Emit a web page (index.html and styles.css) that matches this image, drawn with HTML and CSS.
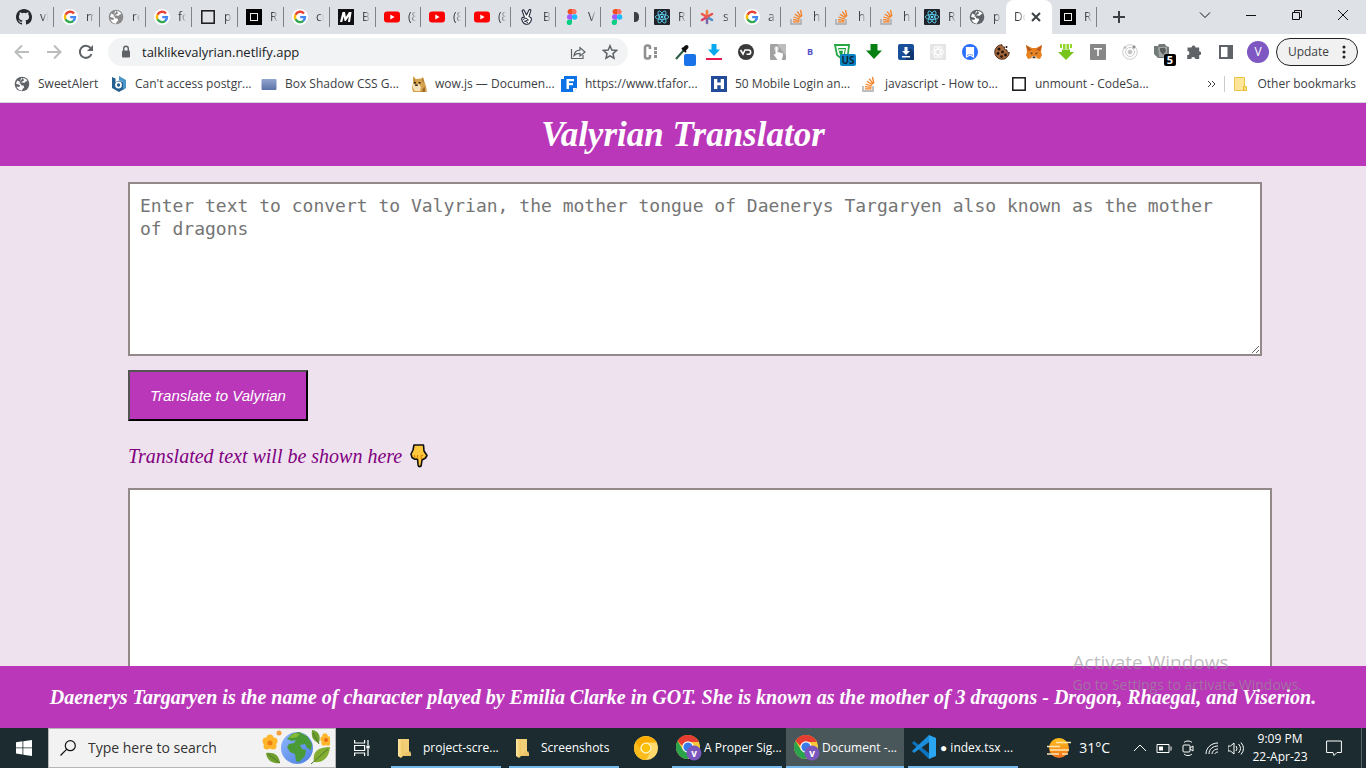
FILE: index.html
```html
<!DOCTYPE html>
<html lang="en">
<head>
<meta charset="utf-8">
<title>Document</title>
<link rel="stylesheet" href="styles.css">
</head>
<body>
<svg class="sprite" aria-hidden="true">
  <defs>
    <linearGradient id="sun" x1="0" y1="0" x2="0" y2="1"><stop offset="0" stop-color="#ffc21a"/><stop offset="1" stop-color="#f0701c"/></linearGradient>
    <linearGradient id="ocean" x1="0" y1="0" x2="1" y2="1"><stop offset="0" stop-color="#8fb8ff"/><stop offset="1" stop-color="#4a7de0"/></linearGradient>
    <linearGradient id="fold" x1="0" y1="0" x2="1" y2="0"><stop offset="0" stop-color="#ffe8a3"/><stop offset="1" stop-color="#eec45e"/></linearGradient>
    <linearGradient id="slate" x1="0" y1="0" x2="0" y2="1"><stop offset="0" stop-color="#93a6d0"/><stop offset="1" stop-color="#5b71a7"/></linearGradient>
  </defs>
  <symbol id="github" viewBox="0 0 16 16"><path fill="#24292f" d="M8 0C3.58 0 0 3.58 0 8c0 3.54 2.29 6.53 5.47 7.59.4.07.55-.17.55-.38v-1.49c-2.23.48-2.7-.94-2.7-.94-.36-.92-.89-1.17-.89-1.17-.73-.5.05-.49.05-.49.8.06 1.23.83 1.23.83.71 1.23 1.87.87 2.33.66.07-.52.28-.87.5-1.07-1.77-.2-3.64-.89-3.64-3.95 0-.87.31-1.59.82-2.15-.08-.2-.36-1.02.08-2.12 0 0 .67-.21 2.2.82a7.6 7.6 0 0 1 4 0c1.53-1.04 2.2-.82 2.2-.82.44 1.1.16 1.92.08 2.12.51.56.82 1.27.82 2.15 0 3.07-1.87 3.75-3.65 3.95.29.25.54.73.54 1.48v2.2c0 .21.15.46.55.38A8 8 0 0 0 16 8c0-4.42-3.58-8-8-8z"/></symbol>
  <symbol id="google" viewBox="0 0 16 16"><circle cx="8" cy="8" r="8" fill="#fff"/><path fill="none" stroke="#ea4335" stroke-width="2.4" d="M12 4.5A5.1 5.1 0 0 0 3.5 5.7"/><path fill="none" stroke="#fbbc05" stroke-width="2.4" d="M3.5 5.6a5.1 5.1 0 0 0 0 4.8"/><path fill="none" stroke="#34a853" stroke-width="2.4" d="M3.5 10.3a5.1 5.1 0 0 0 7.9 1.5"/><path fill="none" stroke="#4285f4" stroke-width="2.4" d="M8.2 8.1H13a5 5 0 0 1-1.8 3.8"/></symbol>
  <symbol id="globe" viewBox="0 0 16 16"><circle cx="8" cy="8" r="7.3" fill="currentColor"/><path fill="#fff" d="M7.2 2.2c2.6-.6 5.2.8 6.300 3l-2 .6-1.700 1.700-1.900-.5-1.300.5.6 1.700 2.200.4.8 1.600-1.500 1.900-.8 1.600c-2.500-.1-4.700-1.900-5.400-4.200L5 11l1.300-1.200-1.600-1.400-2.500-.3c0-1.400.5-2.700 1.300-3.700l2 1.300 1.700-.2-.9-1.500z"/><path fill="currentColor" d="m8.500 2 1.700 2.300-2.200 1.500-1.600.4 2.200.2 2.300.5 1.500-1.600 1.500.4V9l-2.600 3 .2-2-1.600-1-1.700-.1-.8-1.400H5.200z"/></symbol>
  <symbol id="square" viewBox="0 0 16 16"><rect x="1.8" y="1.8" width="12.4" height="12.4" fill="none" stroke="#161616" stroke-width="1.5"/></symbol>
  <symbol id="darksquare" viewBox="0 0 16 16"><path d="M0 0h16v16H0z"/><rect x="4.5" y="4.5" width="7" height="7" fill="none" stroke="#eee"/></symbol>
  <symbol id="mui" viewBox="0 0 16 16"><path fill="#101014" d="M0 0h16v16H0z"/><path fill="#fff" d="M4.500 3h2.500l.8 5L11 3h2.600L12 13H9.900l1-5.500L7.800 12H6.600L5.700 7.500 4.200 13H2z"/></symbol>
  <symbol id="youtube" viewBox="0 0 16 16"><rect y="2.5" width="16" height="11" rx="3" fill="#f00"/><path fill="#fff" d="m6.3 5.5 4.3 2.5-4.3 2.5z"/></symbol>
  <symbol id="victory" viewBox="0 0 16 16"><path fill="#fff" stroke="#25283b" stroke-width="1.1" stroke-linejoin="round" d="M5.5 8.2 3.2 2c-.2-1 1.3-1.7 2-.5L7.5 6 10 1c.7-1 2.1-.4 1.8.7L10 7.6l2 1.2c.8 1.7-.2 4.4-2.2 6-2 1.1-5 .3-6-1.7L2.6 10c0-1.3 1.4-2 2.9-1.8z"/><path fill="none" stroke="#25283b" d="M4 10.5 7 9l2.5 2-3 .6M5 12l4 1.5"/></symbol>
  <symbol id="figma" viewBox="0 0 16 16"><path fill="#f24e1e" d="M8 0H5.7a2.7 2.7 0 0 0 0 5.3H8z"/><path fill="#ff7262" d="M8 0h2.5a2.7 2.7 0 0 1 0 5.3H8z"/><path fill="#a259ff" d="M8 5.3H5.7a2.7 2.7 0 0 0 0 5.4H8z"/><circle cx="10.6" cy="8" r="2.7" fill="#1abcfe"/><path fill="#0acf83" d="M8 10.7H5.7A2.7 2.7 0 1 0 8 13.3z"/></symbol>
  <symbol id="react" viewBox="0 0 16 16"><rect width="16" height="16" rx="1" fill="#20232a"/><g fill="none" stroke="#61dafb" stroke-width=".8"><ellipse cx="8" cy="8" rx="6.7" ry="2.5"/><ellipse cx="8" cy="8" rx="6.7" ry="2.5" transform="rotate(60 8 8)"/><ellipse cx="8" cy="8" rx="6.7" ry="2.5" transform="rotate(120 8 8)"/></g><circle cx="8" cy="8" r="1.3" fill="#61dafb"/></symbol>
  <symbol id="asterisk" viewBox="0 0 16 16"><g stroke-width="2.6" stroke-linecap="round"><path stroke="#f0813a" d="M8 8V2"/><path stroke="#e8574d" d="m8 8 5-3"/><path stroke="#4a8ec9" d="m8 8 5 3"/><path stroke="#7d6aa8" d="M8 8v6"/><path stroke="#d3436c" d="m8 8-5 3"/><path stroke="#ef5a4a" d="M8 8 3 5"/></g></symbol>
  <symbol id="stack" viewBox="0 0 16 16"><path fill="none" stroke="#a7a9ac" stroke-width="1.4" d="M2 10v5h10v-5"/><path stroke="#f48024" stroke-width="1.3" d="M4 12.8h6.5M4 10.6l6.5.8M4.5 8l6.3 2M5.8 5.2l5.6 3.4M8.2 2.6l4 5.2M11.5 1l1.4 6.3"/></symbol>
  <symbol id="bitnami" viewBox="0 0 16 16"><path fill="#255f8f" d="m1 1 3.500 1.500V6L8 4.500l6 2.500v5.500L8 16l-7-4z"/><path fill="#4a96c8" d="m8 0 7 4v8l-3 2V6L8 4z"/><circle cx="7.500" cy="9" r="3.400" fill="#fff"/><circle cx="7.500" cy="9" r="1.700" fill="#255f8f"/></symbol>
  <symbol id="panel" viewBox="0 0 16 16"><rect x=".5" y="3" width="15" height="11" rx="1" fill="url(#slate)"/></symbol>
  <symbol id="doge" viewBox="0 0 16 16"><path fill="#d5a24e" d="m2 0 3 3 5-.5L12 1l1.600 5 1.400 4 1 6H2l-1-4 1-5z"/><path fill="#f3e2b8" d="m2 8 3 1 3-1 2 3-1 4H4l-2-3z"/><path fill="#31241a" d="M3 6h2v1.400H3zM7.600 6h2v1.400h-2zM4.200 8.500h2.500v1.600H4.200z"/><path fill="#9d6a2a" d="m11 4 1-2 1 5zM3 2l1 3-1 1zM12 12l2-1v5h-3z"/></symbol>
  <symbol id="fbook" viewBox="0 0 16 16"><path fill="#0b72e7" d="M3 0h13v12l-4 4H0V3h3z"/><path fill="#fff" d="M5.500 3H13v2.300H8v1.800h4v2.200H8V13H5.500z"/><path fill="#fff" d="M12 12h4l-4 4z"/></symbol>
  <symbol id="hicon" viewBox="0 0 16 16"><path fill="#234b9b" d="M0 0h16v16H0z"/><path fill="#fff" d="M3 3h3.3v3.6h3.4V3H13v10H9.7V9.3H6.3V13H3z"/></symbol>
  <symbol id="folder" viewBox="0 0 16 16"><path fill="#ffe59a" stroke="#ecc546" d="M1.5 1.5h10v9h2v4h-12z"/><path fill="#ffdf7d" stroke="#e6bb35" d="M10.5 14.5v-4h1l2 1v3z"/></symbol>
  <symbol id="winfolder" viewBox="0 0 16 20"><path fill="#f2cf76" d="M3 1h9v12l2 2v3H4z"/><path fill="url(#fold)" d="M1 1h3l2 2v15l-2 2-3-2z"/><path fill="#d6a848" d="m8 15 6-2v5H6z" opacity=".3"/></symbol>
  <symbol id="chrome" viewBox="0 0 28 26"><circle cx="12" cy="12" r="12" fill="#f8c73a"/><path fill="#e53d32" d="M1.600 6A12 12 0 0 1 22.800 7H12a6 6 0 0 0-5.600 4z"/><path fill="#2ba24c" d="M1.600 6A12 12 0 0 0 12 24l5-9-5 3-5-3z"/><circle cx="12" cy="12" r="5.800" fill="#fff"/><circle cx="12" cy="12" r="4.600" fill="#387be8"/><circle cx="18" cy="18" r="7.500" fill="#7b57bd"/><text x="18" y="21.500" class="glyph-text" text-anchor="middle" fill="#fff" font-size="10" font-weight="700">v</text></symbol>
</svg>

<div class="browser">
  <div class="tabstrip">
    <div class="tabs">
      <a class="tab" href="#"><svg><use href="#github"/></svg><span>vi</span></a>
      <a class="tab" href="#"><svg><use href="#google"/></svg><span>mo</span></a>
      <a class="tab light" href="#"><svg><use href="#globe"/></svg><span>re</span></a>
      <a class="tab" href="#"><svg><use href="#google"/></svg><span>fo</span></a>
      <a class="tab" href="#"><svg><use href="#square"/></svg><span>p</span></a>
      <a class="tab" href="#"><svg><use href="#darksquare"/></svg><span>R</span></a>
      <a class="tab" href="#"><svg><use href="#google"/></svg><span>cr</span></a>
      <a class="tab" href="#"><svg><use href="#mui"/></svg><span>B</span></a>
      <a class="tab" href="#"><svg><use href="#youtube"/></svg><span>(8</span></a>
      <a class="tab" href="#"><svg><use href="#youtube"/></svg><span>(8</span></a>
      <a class="tab" href="#"><svg><use href="#youtube"/></svg><span>(8</span></a>
      <a class="tab" href="#"><svg><use href="#victory"/></svg><span>B</span></a>
      <a class="tab" href="#"><svg><use href="#figma"/></svg><span>V</span></a>
      <a class="tab" href="#"><svg><use href="#figma"/></svg><svg class="half" viewBox="0 0 9 16"><path fill="#3c4043" d="M1 3c4 0 5 2 5 5s-1 5-5 5z"/></svg></a>
      <a class="tab" href="#"><svg><use href="#react"/></svg><span>R</span></a>
      <a class="tab" href="#"><svg><use href="#asterisk"/></svg><span>s</span></a>
      <a class="tab" href="#"><svg><use href="#google"/></svg><span>a</span></a>
      <a class="tab" href="#"><svg><use href="#stack"/></svg><span>h</span></a>
      <a class="tab" href="#"><svg><use href="#stack"/></svg><span>h</span></a>
      <a class="tab" href="#"><svg><use href="#stack"/></svg><span>h</span></a>
      <a class="tab" href="#"><svg><use href="#react"/></svg><span>R</span></a>
      <a class="tab last-before" href="#"><svg><use href="#globe"/></svg><span>p</span></a>
      <div class="tab active"><span>Do</span><button class="tab-close" aria-label="Close tab"><svg viewBox="0 0 16 16"><path d="m4 4 8 8m0-8-8 8"/></svg></button></div>
      <a class="tab" href="#"><svg><use href="#darksquare"/></svg><span>R</span></a>
    </div>
    <button class="new-tab" aria-label="New tab"><svg viewBox="0 0 16 16"><path d="M8 2v12M2 8h12"/></svg></button>
    <div class="window-buttons">
      <button aria-label="Search tabs"><svg viewBox="0 0 16 16"><path d="m3 5.500 5 5 5-5"/></svg></button>
      <button aria-label="Minimize"><svg viewBox="0 0 16 16"><path d="M3 8.500h10"/></svg></button>
      <button aria-label="Restore"><svg viewBox="0 0 16 16"><path d="M3.500 5.500h7v7h-7zM5.500 5.500v-2h7v7h-2"/></svg></button>
      <button aria-label="Close"><svg viewBox="0 0 16 16"><path d="m3 3 10 10M13 3 3 13"/></svg></button>
    </div>
  </div>

  <div class="toolbar">
    <nav class="nav-buttons">
      <button class="dim" aria-label="Back"><svg viewBox="0 0 16 16"><path d="M15 8H2m6-6.500L1.500 8 8 14.500"/></svg></button>
      <button class="dim" aria-label="Forward"><svg viewBox="0 0 16 16"><path d="M1 8h13M8 1.500 14.500 8 8 14.500"/></svg></button>
      <button aria-label="Reload"><svg viewBox="0 0 16 16"><path d="M13.500 10A6 6 0 1 1 12.500 4"/><path class="solid" d="M15 1v6H9z"/></svg></button>
    </nav>
    <div class="omnibox">
      <svg viewBox="0 0 16 16"><rect x="4" y="6.500" width="8" height="7" rx="1" fill="#5f6368"/><path d="M5.700 7V4.600a2.300 2.300 0 0 1 4.600 0V7" fill="none" stroke="#5f6368" stroke-width="1.400"/></svg>
      <input type="text" aria-label="Address" value="talklikevalyrian.netlify.app">
      <button aria-label="Share"><svg viewBox="0 0 16 16" fill="none" stroke="#5f6368" stroke-width="1.200"><path d="M1.500 5v9.500H13V11"/><path d="M4 11.500c.5-3.500 2.500-5.200 6-5.300V3.500L15 8l-5 4V9.300c-2.500 0-4.500.6-6 2.200z"/></svg></button>
      <button aria-label="Bookmark"><svg viewBox="0 0 16 16" fill="none" stroke="#5f6368" stroke-width="1.500"><path d="m8 1.800 1.800 4.300 4.700.4-3.500 3.100 1 4.600-4-2.400-4 2.400 1-4.600-3.500-3.100 4.700-.4z"/></svg></button>
    </div>
    <div class="extensions">
      <button aria-label="CSS viewer"><svg viewBox="0 0 16 16"><path d="M8 5V3.500a2 2 0 0 0-2-2H5a2 2 0 0 0-2 2v9a2 2 0 0 0 2 2h1a2 2 0 0 0 2-2V11" fill="none" stroke="#909090" stroke-width="2.600"/><path fill="#909090" d="M12 3h3v3h-3zM12 7h3v3h-3zM12 11h3v3h-3z"/></svg></button>
      <button aria-label="Color picker"><svg viewBox="0 0 16 16"><path stroke="#2c5a40" stroke-width="2" d="m2 15 8-9"/><path stroke="#111" stroke-width="4" stroke-linecap="round" d="m10.500 5 2-2"/><path stroke="#111" stroke-width="2" d="m8 4 4 4"/></svg><i class="badge blue"></i></button>
      <button aria-label="Downloader"><svg viewBox="0 0 16 16"><path fill="#07a8ed" d="M5.500 0h5v5.500H14L8 12 2 5.500h3.500z"/><path fill="#e8174f" d="M0 14h16v2H0z"/></svg></button>
      <button aria-label="Video downloader"><svg viewBox="0 0 16 16"><circle cx="8" cy="8" r="8" fill="#3a3a3a"/><path d="m2.500 6 2.500 4 2-4h3.500a2 2 0 0 1 0 4.300H8.500" fill="none" stroke="#fff" stroke-width="1.600"/></svg></button>
      <button aria-label="Clicker"><svg viewBox="0 0 16 16"><rect width="16" height="16" rx="1" fill="#a2a2a2"/><path fill="#bdbdbd" d="M7 0h9v12z"/><circle cx="6.500" cy="4.500" r="2.500" fill="#c9c9c9"/><path fill="#fff" d="M5.500 4c0-1.400 2-1.400 2 0v4l5 1.300c1 .7.300 4-.8 6.700H7.500L4 11c-.3-1.300.8-1.300 1.500-.5z"/></svg></button>
      <button class="letter-b">B</button>
      <button aria-label="VPN"><svg viewBox="0 0 16 16"><path d="M1 1h14l-1 9-6 5-5-4z" fill="none" stroke="#28a745" stroke-width="1.800"/><path fill="#1ba23c" d="M4 4h8l-1 6-3 3-2-2z"/><path stroke="#fff" stroke-width="1.400" fill="none" d="M5 6h5L9 10"/></svg><i class="badge us">US</i></button>
      <button aria-label="Save"><svg viewBox="0 0 16 16"><path fill="#087f12" d="M4.500 0h7v6.500H16L8 15 0 6.500h4.500z"/></svg></button>
      <button aria-label="Download manager"><svg viewBox="0 0 16 16"><rect width="16" height="16" rx="2" fill="#184f9b"/><path fill="#10376f" d="m12 4 4 4v8H7z"/><path fill="#fff" d="M6.500 3h3v4H12l-4 4-4-4h2.500zM4 12h8v1.500H4z"/></svg></button>
      <button aria-label="React tools"><svg viewBox="0 0 16 16"><path fill="#e5e5e5" d="M0 0h16v16H0z"/><g fill="none" stroke="#fff"><ellipse cx="8" cy="8" rx="6" ry="2.500"/><ellipse cx="8" cy="8" rx="6" ry="2.500" transform="rotate(60 8 8)"/><ellipse cx="8" cy="8" rx="6" ry="2.500" transform="rotate(120 8 8)"/></g></svg></button>
      <button aria-label="Reader"><svg viewBox="0 0 16 16"><circle cx="8" cy="8" r="8" fill="#2b70ff"/><path fill="none" stroke="#fff" stroke-width="1.200" d="M4.500 3.500h7v9.500L8 11l-3.500 2z"/><path fill="#fff" d="M5 4h6v7L8 10l-3 1z"/></svg></button>
      <button aria-label="Cookies"><svg viewBox="0 0 16 16"><path fill="#a5683c" stroke="#54301c" d="M8 .7a7.300 7.300 0 1 0 7.300 7.800c-2 .3-2.600-1-2.300-2.500-2 0-3-1-2.400-3C9 3.200 8 2 8 .7z"/><g fill="#1e110b"><circle cx="5" cy="5" r="1.500"/><circle cx="4" cy="9.500" r="1.400"/><circle cx="8.500" cy="8" r="1.400"/><circle cx="7.500" cy="12.500" r="1.300"/><circle cx="11.500" cy="11" r="1.400"/><circle cx="12.500" cy="3" r="1"/></g></svg></button>
      <button aria-label="Wallet"><svg viewBox="0 0 16 16"><path fill="#e8821e" d="m0 1 6 3h4l6-3-1 7 1 3-2 4-4-1-2 1-2-1-4 1-2-4 1-3z"/><path fill="#b35820" d="m0 1 6 5-4 1zM16 1l-6 5 4 1z"/><path fill="#ead1b7" d="m5 13 1.500-1h3l1.500 1-2 2H7z"/><path fill="#26323f" d="M4 8.500 6.500 9l-.5 1.500zM12 8.500 9.500 9l.5 1.500zM6.800 12.500h2.400V14H6.800z"/></svg></button>
      <button aria-label="Grab"><svg viewBox="0 0 16 16"><path fill="#77c51c" d="M4 5.500h8V8h4l-8 8-8-8h4z"/><path fill="#8ed52c" d="M2 0h2v4H2zM5 0h2.500v5H5zM8.500 0H11v5H8.500zM12 0h2v4h-2z"/></svg></button>
      <button aria-label="Text"><svg viewBox="0 0 16 16"><rect width="16" height="16" rx="1" fill="#878787"/><path fill="#fff" d="M4 4h8v1.500H8.800V12H7.200V5.500H4z"/></svg></button>
      <button aria-label="Orbit"><svg viewBox="0 0 16 16" fill="none" stroke="#ccc"><circle cx="8" cy="8" r="7.300"/><circle cx="8" cy="8" r="4.500"/><circle cx="8" cy="8" r="2" fill="#bbb"/><circle cx="12" cy="3" r="1.500" fill="#777"/><circle cx="3" cy="3.500" r="1" fill="#999"/></svg></button>
      <button aria-label="Tasks"><svg viewBox="0 0 16 16"><path fill="#737b78" d="M0 2h4l1-2h6l1 2 3 1v11H4l-4-4z"/><path fill="#a0a5a3" d="M4 3h9v10H5z"/><path fill="#5a5f5d" d="M6 4h5l1 3-3 4-3-4z"/></svg><i class="badge five">5</i></button>
      <button aria-label="Extensions"><svg viewBox="0 0 16 16"><path fill="#5f6368" d="M1.500 3.500h4a2 2 0 0 1 4 0h3.700V7.300a2 2 0 0 1 0 4V15h-4a2 2 0 0 0-4 0h-4v-4a2 2 0 0 0 .3-4z"/></svg></button>
      <button aria-label="Side panel"><svg viewBox="0 0 16 16"><path fill="#5f6368" d="M1 1h14v14H1z"/><path fill="#fff" d="M3 3h6.500v10H3z"/></svg></button>
      <button class="avatar">V</button>
    </div>
    <button class="update">Update<svg viewBox="0 0 4 16"><circle cx="2" cy="3" r="1.500"/><circle cx="2" cy="8" r="1.500"/><circle cx="2" cy="13" r="1.500"/></svg></button>
  </div>

  <nav class="bookmarks">
    <a class="short" href="#"><svg><use href="#globe"/></svg>SweetAlert</a>
    <a href="#"><svg><use href="#bitnami"/></svg>Can't access postgr...</a>
    <a href="#"><svg><use href="#panel"/></svg>Box Shadow CSS G...</a>
    <a href="#"><svg><use href="#doge"/></svg>wow.js — Documen...</a>
    <a href="#"><svg><use href="#fbook"/></svg>https://www.tfafor...</a>
    <a href="#"><svg><use href="#hicon"/></svg>50 Mobile Login an...</a>
    <a href="#"><svg><use href="#stack"/></svg>javascript - How to...</a>
    <a href="#"><svg><use href="#square"/></svg>unmount - CodeSa...</a>
    <button class="more" aria-label="More bookmarks"><svg viewBox="0 0 16 16"><path d="m4 5 3 3-3 3m4-6 3 3-3 3"/></svg></button>
    <a class="other" href="#"><svg><use href="#folder"/></svg>Other bookmarks</a>
  </nav>
</div>

<div class="page">
  <header class="site-header"><h1>Valyrian Translator</h1></header>
  <main class="translator">
    <textarea class="source" aria-label="Text to translate" placeholder="Enter text to convert to Valyrian, the mother tongue of Daenerys Targaryen also known as the mother of dragons"></textarea>
    <button class="translate">Translate to Valyrian</button>
    <p class="hint">Translated text will be shown here
      <svg viewBox="0 0 18 24" role="img" aria-label="pointing down"><path fill="#ffc83d" stroke="#111" stroke-width="1.600" stroke-linejoin="round" d="M4 1h9.500l.5 6 3 4.500-1.500 2.500-3.500 2-.8 5.500c-.3 1.500-2.700 1.500-3 0L7.500 15l-3 .2L2 13.500 1 10l2-4z"/><path fill="none" stroke="#d67d00" stroke-width="1.100" d="m4.500 11 .2 3M7.500 11v4M11.500 15l-.5-3 2-1"/></svg>
    </p>
    <div class="output" role="status" aria-label="Translation"></div>
  </main>
  <footer class="site-footer">Daenerys Targaryen is the name of character played by Emilia Clarke in GOT. She is known as the mother of 3 dragons - Drogon, Rhaegal, and Viserion.</footer>
  <div class="activate"><strong>Activate Windows</strong><span>Go to Settings to activate Windows.</span></div>
</div>

<div class="taskbar">
  <button class="start" aria-label="Start"><svg viewBox="0 0 16 16" fill="#fff"><path d="m0 2.200 6.500-.9v6.200H0zM7.300 1.200 16 0v7.500H7.300zM0 8.300h6.500v6.200L0 13.600zM7.300 8.300H16V16l-8.700-1.200z"/></svg></button>
  <label class="search">
    <svg viewBox="0 0 16 16" fill="none" stroke="#111" stroke-width="1.200"><circle cx="10.300" cy="5.700" r="5"/><path d="M6.800 9.200.5 15.500"/></svg>
    <input type="text" placeholder="Type here to search" aria-label="Search">
    <svg class="earth" viewBox="0 0 68 36">
      <circle cx="35" cy="18" r="16" fill="url(#ocean)"/>
      <path fill="#4b9a38" d="m25 9 5-5 7-2 8 4 5 8-1 6-4-2-2-4-5 1 2 4 4 1-1 6-6 6-3-1-1-7-5-2-3-5 2-3 5-1 2-3-4 1z"/>
      <path fill="#86b936" d="m27 8 5-5 6 1-3 3-4 1z"/>
      <g fill="#ffb62b"><circle cx="4" cy="11" r="3.500"/><circle cx="8" cy="8" r="3.500"/><circle cx="12" cy="11" r="3.500"/><circle cx="11" cy="16" r="3.500"/><circle cx="5" cy="16" r="3.500"/><circle cx="61" cy="9" r="2.700"/><circle cx="66" cy="9" r="2.700"/><circle cx="63" cy="6" r="2.700"/><circle cx="62" cy="13" r="2.700"/><circle cx="66" cy="13" r="2.700"/></g>
      <circle cx="8" cy="13" r="2.500" fill="#f07f13"/><circle cx="64" cy="10" r="2" fill="#e96b18"/><circle cx="17" cy="3" r="2.500" fill="#f3a13c"/>
      <path fill="#6f9f2f" d="M4 23c7-1 13 1 14 10-7 1-13-2-14-10zM50 0c7 1 9 6 7 13-6-2-8-6-7-13z"/>
      <path fill="#83ad31" d="M68 17c-12 0-18 5-16 15 9 1 15-4 16-15z"/><path fill="none" stroke="#4f7826" d="m6 24 12 9M66 19 49 34M51 3l6 11"/>
    </svg>
  </label>
  <button class="taskview" aria-label="Task view"><svg viewBox="0 0 16 16" fill="none" stroke="#fff" stroke-width="1.200"><path d="M.6 0v3h10V0M.6 5.500h10v5H.6zM.6 16v-3h10v3M14 0v5M14 9v7"/><path fill="#fff" d="M13 6h2v2h-2z"/></svg></button>
  <div class="tasks">
    <button class="task folder"><svg><use href="#winfolder"/></svg>project-scre...</button>
    <button class="task folder"><svg><use href="#winfolder"/></svg>Screenshots</button>
    <button class="canary" aria-label="Chrome Canary"><svg viewBox="0 0 24 24"><circle cx="12" cy="12" r="12" fill="#ffd969"/><path fill="#f9ab00" d="M1.600 6A12 12 0 0 1 22.400 6.500H12a6 6 0 0 0-5.500 8z"/><path fill="#fbbc1c" d="M1.600 6A12 12 0 0 0 12 24l5-9-5 3-5.500-3z"/><circle cx="12" cy="12" r="5.500" fill="#fff3c4"/><circle cx="12" cy="12" r="4.300" fill="#ffc107"/></svg></button>
    <button class="task"><svg><use href="#chrome"/></svg>A Proper Sig...</button>
    <button class="task current"><svg><use href="#chrome"/></svg>Document -...</button>
    <button class="task"><svg viewBox="0 0 28 26"><path fill="#0d73bd" d="m0 8 2-2 17 14-2 4z"/><path fill="#1c8ddb" d="M0 16 17 0l3 5L2 18z"/><path fill="#2aa5f2" d="m17 0 7 3v18l-7 3z"/></svg>● index.tsx ...</button>
  </div>
  <div class="tray">
    <button class="weather"><svg viewBox="0 0 24 20"><circle cx="12" cy="10" r="10" fill="url(#sun)"/><path stroke="#fbe6b4" stroke-width="1.600" d="M9 4.500h15M0 8.500h13M3 12h19M0 16h12M15 16h6"/></svg>31°C</button>
    <button aria-label="Hidden icons"><svg viewBox="0 0 16 16"><path d="m2 11 6-6 6 6"/></svg></button>
    <button aria-label="Battery"><svg viewBox="0 0 16 16"><path d="M1 4.500h12v8H1zM15 6.500v4"/><path class="fill" d="M3 6.500h4v4H3z"/></svg></button>
    <button aria-label="Meet now"><svg viewBox="0 0 16 16"><rect x="3" y="5" width="7" height="7" rx="1"/><path d="m10 8 3-2v5l-3-2M4 2.500c2-2 6-2 8 0M4 14c2 2 6 2 8 0"/></svg></button>
    <button aria-label="Network"><svg viewBox="0 0 16 16"><path d="M2 14C2 8 7 3 14 3M5 14c0-5 4-8 9-8M8 14c0-3 3-5 6-5M11 14c0-1 1-2 3-2"/></svg></button>
    <button aria-label="Volume"><svg viewBox="0 0 16 16"><path d="M0 6h2.500L6 3v11l-3.500-3H0zM8 6q2 2.500 0 5M10.500 4q4 4.500 0 9M13 2.500q5 6 0 12"/></svg></button>
    <button class="clock"><span>9:09 PM</span><span>22-Apr-23</span></button>
    <button class="notice" aria-label="Notifications"><svg viewBox="0 0 16 16"><path d="M.6 1h14.800v11.500H11L8 15.500 7 12.500H.6z"/></svg></button>
  </div>
</div>
</body>
</html>
```

FILE: styles.css
```css
* { box-sizing: border-box; }
body {
  margin: 0;
  height: 100vh;
  display: flex;
  flex-direction: column;
  overflow: hidden;
  font: 12px/16px "Segoe UI", "Open Sans", sans-serif;
  color: #3c4043;
}
button, input, textarea { font: inherit; color: inherit; }
button { display: flex; align-items: center; justify-content: center; padding: 0; border: 0; background: none; }
input { border: 0; padding: 0; background: none; outline: 0; min-width: 0; }
a { color: inherit; text-decoration: none; }
svg { width: 16px; height: 16px; flex: none; }
.sprite { position: absolute; width: 0; height: 0; }
.glyph-text { font-family: "Open Sans", sans-serif; }

.browser { flex: none; background: #fff; border-bottom: 1px solid #d5d7da; }
.tabstrip { display: flex; height: 34px; background: #dee1e6; }
.tabs { display: flex; padding-left: 8px; }
.tab { display: flex; align-items: center; gap: 8px; width: 45px; padding-left: 8px; position: relative; }
.tab:nth-child(-n+8) { width: 46px; }
.tab span { width: 8px; overflow: hidden; white-space: nowrap; -webkit-mask-image: linear-gradient(90deg, #000 30%, transparent); mask-image: linear-gradient(90deg, #000 30%, transparent); }
.tab .half { width: 9px; }
.tab::after { content: ""; position: absolute; right: 0; top: 7px; width: 1px; height: 20px; background: #808489; }
.tab > svg { color: #5f6368; }
.tab.light > svg { color: #8a8a8a; }
.tab.active { width: 46px; gap: 2px; background: #fff; border-radius: 8px 8px 0 0; }
.tab.active::after, .tab.last-before::after { display: none; }
.tab.active span { width: 12px; }
.tab-close svg { stroke: #3c4043; stroke-width: 2; }
.new-tab { width: 44px; }
.new-tab svg { stroke: #3c4043; stroke-width: 2; }
.window-buttons { display: flex; margin-left: auto; padding-bottom: 5px; }
.window-buttons button { width: 46px; }
.window-buttons svg { fill: none; stroke: #111; }

.toolbar { display: flex; align-items: center; height: 36px; padding-right: 8px; }
.nav-buttons { display: flex; padding: 0 6px; }
.nav-buttons button { width: 32px; height: 32px; }
.nav-buttons svg { fill: none; stroke: #5f6368; stroke-width: 2; }
.nav-buttons .solid { fill: #5f6368; stroke: none; }
.nav-buttons .dim svg { stroke: #babcbe; }
.omnibox { flex: 1; display: flex; align-items: center; gap: 8px; height: 28px; padding: 0 10px; border-radius: 14px; background: #f1f3f4; }
.omnibox input { flex: 1; font-size: 13px; line-height: 20px; color: #202124; }
.omnibox button { margin-left: 8px; }
.extensions { display: flex; padding: 0 2px 0 6px; }
.extensions button { width: 32px; height: 32px; position: relative; }
.badge { position: absolute; font-style: normal; font-weight: 700; font-size: 11px; line-height: 12px; text-align: center; border-radius: 2px; }
.badge.blue { width: 12px; height: 12px; right: 2px; bottom: 2px; background: #1a73e8; }
.badge.us { width: 16px; height: 12px; right: 2px; bottom: 2px; background: #0b84c4; color: #102840; font-size: 10px; }
.badge.five { width: 12px; height: 12px; right: 2px; bottom: 2px; background: #000; color: #fff; }
.extensions .letter-b { font-size: 9px; font-weight: 700; color: #5552c5; }
.extensions .avatar { width: 22px; height: 22px; margin: 5px; border-radius: 50%; background: #7e57c2; color: #fff; }
.update { width: 82px; height: 28px; gap: 13px; border: 1px solid #202124; border-radius: 14px; background: #f1f1f1; }
.update svg { width: 4px; fill: #202124; }

.bookmarks { display: flex; align-items: center; height: 32px; padding: 0 10px 4px 14px; color: #3c4043; }
.bookmarks a { display: flex; align-items: center; gap: 8px; width: 150px; white-space: nowrap; }
.bookmarks svg { color: #5f6368; }
.bookmarks .short { width: 97px; }
.bookmarks .more { margin-left: auto; }
.more svg { fill: none; stroke: #3c4043; stroke-width: 1; }
.bookmarks .other { width: auto; margin-left: 4px; padding-left: 8px; border-left: 1px solid #c8cacd; }

.page { flex: 1; min-height: 0; display: flex; flex-direction: column; position: relative; background: #efe2ef; font-family: "Times New Roman", "Liberation Serif", serif; }
.site-header { padding: 10px; background: #b937b8; color: #fff; text-align: center; }
.site-header h1 { margin: 0; font-size: 35px; line-height: 43px; font-style: italic; }
.translator { flex: 1; min-height: 0; overflow: hidden; display: flex; flex-direction: column; align-items: flex-start; padding: 16px 94px 0 128px; }
.source { align-self: stretch; flex: none; height: 174px; margin: 0 10px 14px 0; padding: 10px 20px 10px 10px; border: 2px solid #948989; background: #fff; font: 18px/23px Consolas, "DejaVu Sans Mono", monospace; resize: both; outline: 0; }
.source::placeholder { color: #757575; }
.translate { flex: none; padding: 12px 20px; border: 2px outset #000; background: #b937b8; color: #fff; font: italic 15px/23px Arial, "Liberation Sans", sans-serif; }
.hint { flex: none; display: flex; align-items: center; gap: 8px; margin: 23px 0 20px; color: purple; font-size: 20px; line-height: 24px; font-style: italic; }
.hint svg { width: 18px; height: 24px; }
.output { align-self: stretch; flex: none; height: 250px; border: 2px solid #948989; background: #fff; }
.site-footer { padding: 20px; background: #b937b8; color: #fff; text-align: center; font-size: 20px; line-height: 22px; font-weight: 700; font-style: italic; }
.activate { position: absolute; right: 64px; bottom: 32px; display: flex; flex-direction: column; color: rgba(150, 150, 150, .62); font-family: "Segoe UI", "Open Sans", sans-serif; font-size: 14px; line-height: 22px; }
.activate strong { font-weight: 400; font-size: 19px; line-height: 24px; }

.taskbar { flex: none; display: flex; height: 40px; background: #1b2b2f; color: #fff; }
.start { width: 48px; }
.search { width: 288px; display: flex; align-items: center; gap: 12px; padding: 0 5px 0 11px; border: 1px solid #b5b5b5; background: #f2f2f2; }
.search input { flex: 1; font-size: 14px; line-height: 20px; }
.search input::placeholder { color: #333; opacity: 1; }
.search .earth { width: 68px; height: 36px; }
.taskview { width: 51px; }
.tasks { display: flex; }
.task { width: 118px; justify-content: flex-start; padding-left: 8px; position: relative; white-space: nowrap; }
.task svg { width: 28px; height: 26px; }
.task.folder { padding-left: 10px; gap: 10px; }
.task.folder svg { width: 16px; height: 20px; }
.task::after { content: ""; position: absolute; left: 4px; right: 4px; bottom: 0; height: 2px; background: #76b9ed; }
.task.current { background: #4a575a; }
.task.current::after { left: 0; right: 0; }
.canary { width: 45px; }
.canary svg { width: 24px; height: 24px; }
.tray { display: flex; margin-left: auto; padding-right: 4px; }
.tray button { width: 24px; }
.tray svg { fill: none; stroke: #fff; }
.tray .fill { fill: #fff; stroke: none; }
.tray .weather { width: auto; margin-right: 18px; gap: 8px; font-size: 14px; }
.weather svg { width: 24px; height: 20px; stroke: none; }
.tray .clock { width: 52px; margin-left: 6px; flex-direction: column; line-height: 18px; white-space: nowrap; }
.tray .notice { width: 56px; border-right: 1px solid #59676a; }
```
